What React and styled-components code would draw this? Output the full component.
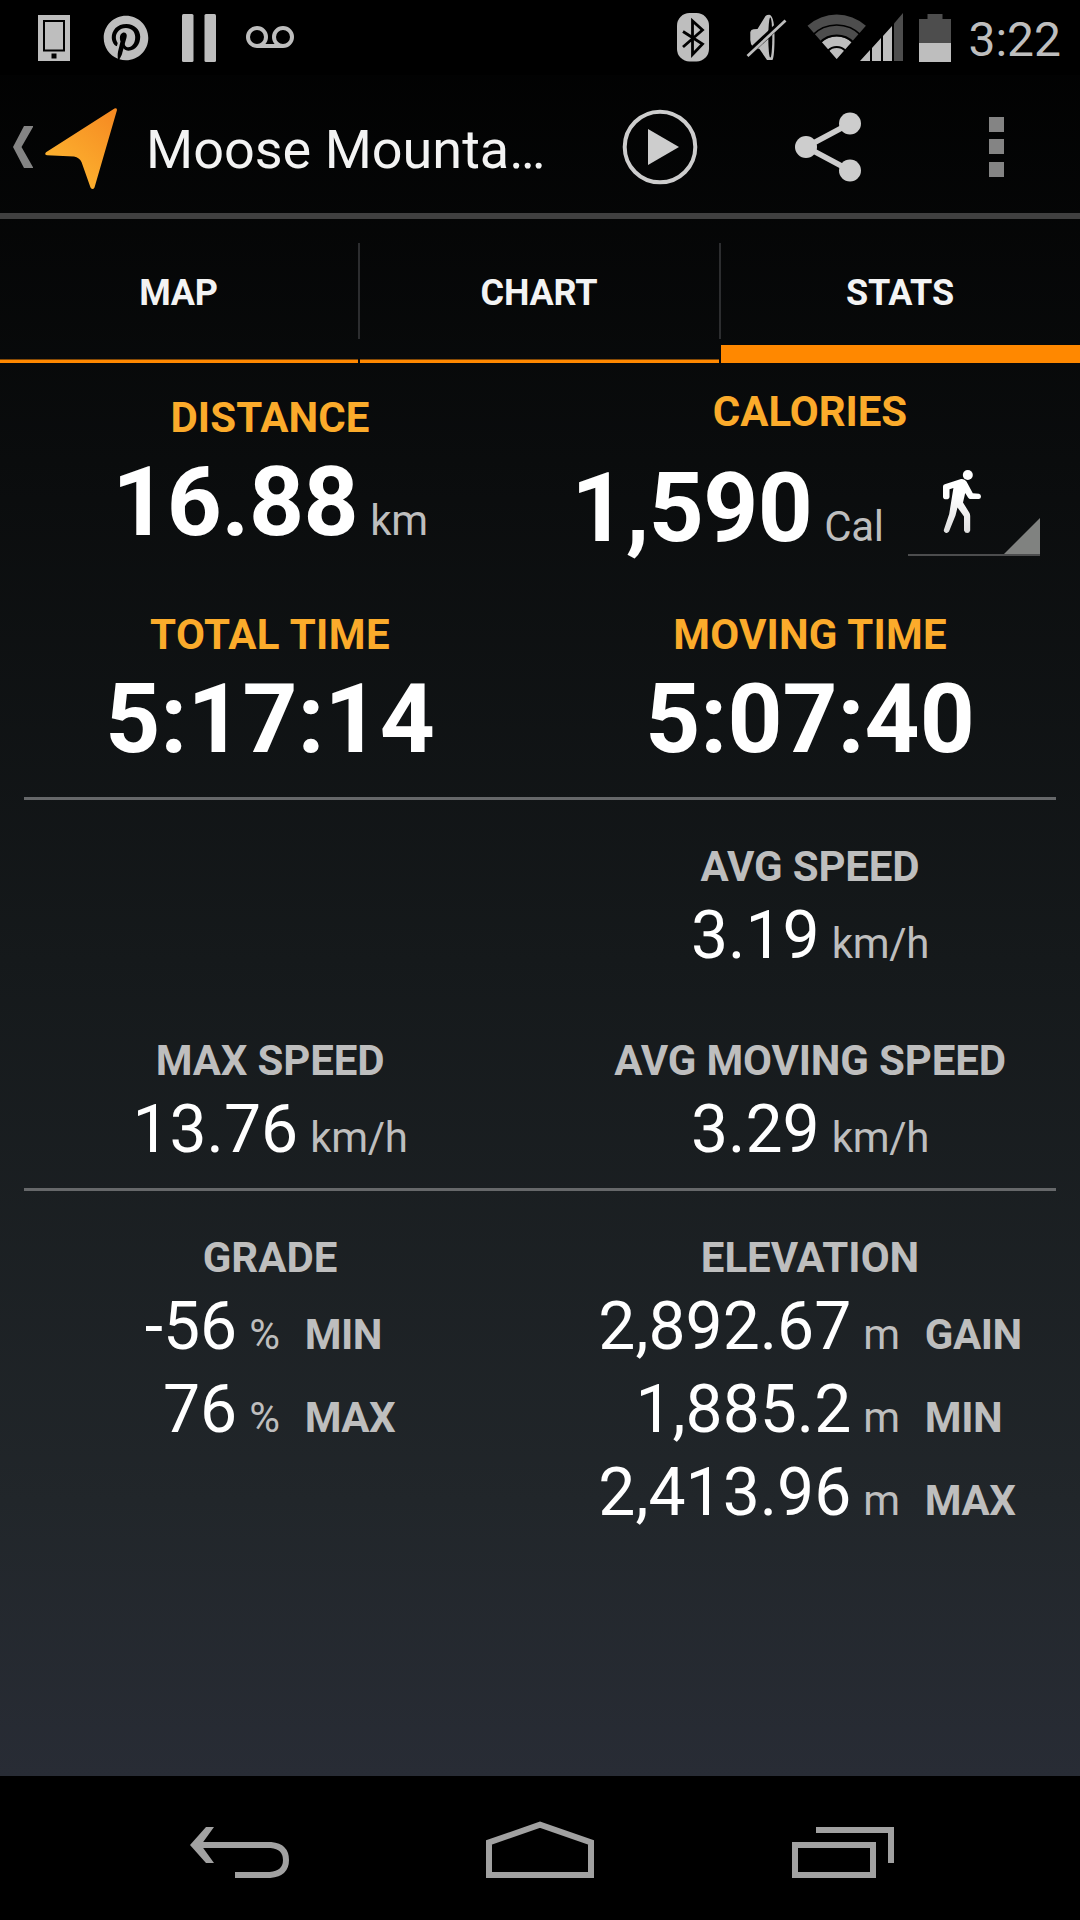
import React from 'react';
import styled, { createGlobalStyle } from 'styled-components';
import { FaPinterest } from 'react-icons/fa';

const GlobalStyle = createGlobalStyle`
  * {
    box-sizing: border-box;
  }

  body {
    margin: 0;
    background: #000;
    font-family: Roboto, sans-serif;
  }

  svg {
    display: block;
    flex-shrink: 0;
  }
`;

const Screen = styled.div`
  display: flex;
  flex-direction: column;
  width: 1080px;
  height: 1920px;
  overflow: hidden;
  background: linear-gradient(180deg, #000 0, #15191b 960px, #21262a 1500px, #282c35 1776px);
`;

const StatusBar = styled.header`
  display: flex;
  align-items: center;
  justify-content: space-between;
  height: 75px;
  padding: 0 19px 0 38px;
  background: #000;
  color: #bebebe;
`;

const Notifications = styled.div`
  display: flex;
  align-items: center;
  gap: 33px;
`;

const VoicemailSlot = styled.div`
  margin: 0 0 2px -3px;
`;

const SystemIcons = styled.div`
  display: flex;
  align-items: center;
`;

const IconSlot = styled.div`
  margin-right: ${props => props.$gap}px;
`;

const Clock = styled.span`
  font-size: 48px;
  line-height: 56px;
  padding-top: 4px;
`;

const ActionBar = styled.div`
  display: flex;
  align-items: center;
  height: 144px;
  border-bottom: 6px solid #404040;
`;

const HomeButton = styled.div`
  display: flex;
  align-items: center;
  width: 146px;
  padding: 6px 0 0 13px;
  gap: 12px;
`;

const LogoSlot = styled.div`
  padding-top: 3px;
`;

const Title = styled.h1`
  flex: 1;
  margin: 0;
  padding-top: 12px;
  color: #f3f3f3;
  font-size: 54px;
  font-weight: 400;
  line-height: 64px;
  white-space: nowrap;
`;

const ActionButton = styled.div`
  display: flex;
  align-items: center;
  justify-content: center;
  width: 168px;
  height: 138px;
  padding-top: 6px;
`;

const Tabs = styled.nav`
  display: grid;
  grid-template-columns: 358px 2px 359px 2px 359px;
  height: 144px;
`;

const Tab = styled.div`
  display: flex;
  align-items: center;
  justify-content: center;
  height: 144px;
  padding: 4px 1px 0 0;
  color: #f3f3f3;
  font-size: 36px;
  font-weight: 700;
  line-height: 42px;
  letter-spacing: -0.2px;
  box-shadow: inset 0 ${props => (props.$active ? -18 : -3.5)}px 0 #ff8800;
`;

const TabDivider = styled.div`
  width: 2px;
  height: 96px;
  margin-top: 24px;
  background: #2c2d2f;
`;

const Stats = styled.main`
  flex: 1;
`;

const Row = styled.section`
  display: grid;
  grid-template-columns: 1fr 1fr;
  height: ${props => props.$height}px;
`;

const Cell = styled.div`
  display: flex;
  flex-direction: column;
  align-items: center;
  padding-top: ${props => props.$top || 0}px;
`;

const Label = styled.h2`
  margin: 0;
  color: ${props => (props.$accent ? '#fbab2b' : '#bebebe')};
  font-size: 42px;
  font-weight: 700;
  line-height: 49px;
  letter-spacing: ${props => props.$track || 0}px;
  white-space: nowrap;
`;

const Reading = styled.div`
  display: flex;
  align-items: baseline;
  margin-top: ${props => props.$top}px;
  white-space: nowrap;
`;

const BigValue = styled.span`
  color: #fff;
  font-size: 96px;
  font-weight: 700;
  line-height: 112px;
  letter-spacing: ${props => props.$track || 0}px;
`;

const Value = styled.span`
  color: #fff;
  font-size: 66px;
  line-height: 77px;
`;

const Unit = styled.span`
  margin-left: 12px;
  color: #bebebe;
  font-size: 42px;
  letter-spacing: -0.3px;
`;

const Divider = styled.hr`
  height: 3px;
  margin: 0 24px 42px;
  border: none;
  background: #66686a;
`;

const RangeTable = styled.div`
  display: grid;
  grid-template-columns: auto auto auto;
  align-items: baseline;
  row-gap: 6px;
  margin-top: 6px;

  ${Value} {
    text-align: right;
  }

  ${Label} {
    margin-left: 25px;
  }
`;

const Spinner = styled.div`
  display: flex;
  align-self: flex-start;
  width: 132px;
  height: 88px;
  margin: 16px 9px 0 24px;
  border-bottom: 2px solid #4c4d4e;
`;

const WalkSlot = styled.div`
  margin: 2px 23px 0 35px;
`;

const CornerSlot = styled.div`
  margin-top: 50px;
`;

const NavBar = styled.footer`
  display: flex;
  justify-content: space-between;
  height: 144px;
  padding: 45px 186px 0 190px;
  background: #000;
`;

const PhoneIcon = () => (
  <svg width="32" height="46" viewBox="0 0 32 46">
    <path fill="#bebebe" d="M0 0h32v46H0z" />
    <path fill="none" stroke="#000" strokeWidth="2" d="M6 6h20v29.500H6z" />
    <path fill="#000" d="M13.500 38.500h5v5h-5z" />
  </svg>
);

const PauseIcon = () => (
  <svg width="34" height="48" viewBox="0 0 34 48" fill="#bebebe">
    <rect width="11.500" height="48" rx="1.500" />
    <rect x="22.500" width="11.500" height="48" rx="1.500" />
  </svg>
);

const VoicemailIcon = () => (
  <svg width="48" height="22" viewBox="0 0 48 22" fill="none" stroke="#bebebe" strokeWidth="4">
    <circle cx="11" cy="11" r="9" />
    <circle cx="37" cy="11" r="9" />
    <path d="M11 20h26" />
  </svg>
);

const BluetoothIcon = () => (
  <svg width="32" height="49" viewBox="0 0 32 49">
    <rect width="32" height="48.500" rx="12.500" fill="#bebebe" />
    <path
      fill="none"
      stroke="#000"
      strokeWidth="2.800"
      d="M6 18.500l19.500 12.500-10 10.500V8l10 9L6 34"
    />
  </svg>
);

const MutedIcon = () => (
  <svg width="41" height="48" viewBox="0 0 41 48">
    <path
      fill="#bebebe"
      d="M4.300 18Q5 15.300 7.500 15.300L11.500 15L19.500 2Q21 .7 24 .9Q28.500 3 28.500 23Q28.500 42 26.500 46H21L13.500 35L7 33Q4.300 30 4.300 26Z"
    />
    <ellipse cx="24.300" cy="23.500" rx="2" ry="20" fill="#000" />
    <path stroke="#000" strokeWidth="6" d="M0 41.500L38 6" />
    <path stroke="#bebebe" strokeWidth="2.800" d="M1.500 42L39.500 6.500" />
  </svg>
);

// wifi fan and mobile signal sit tight against each other
const SignalIcons = () => (
  <svg width="96" height="49" viewBox="0 0 96 49">
    <path fill="#4d4d4d" d="M29.700 46L.5 12.700A44 44 0 0 1 58.900 12.700Z" />
    <path fill="#bebebe" d="M29.700 46L14.800 29.100A22.500 22.500 0 0 1 44.600 29.100Z" />
    <g fill="none" stroke="#000">
      <path strokeWidth="1.600" d="M5.200 22.400A34 34 0 0 1 54.200 22.400" />
      <path strokeWidth="2" d="M12.800 29.700A23.500 23.500 0 0 1 46.600 29.700" />
      <path strokeWidth="2" d="M21 37.700A12 12 0 0 1 38.400 37.700" />
    </g>
    <path fill="#bebebe" d="M53 48L63 37V48ZM65 35L74 25V48H65ZM76 23L85 13V48H76Z" />
    <path fill="#4d4d4d" d="M87 10.500L96 0V48H87Z" />
  </svg>
);

const BatteryIcon = () => (
  <svg width="32" height="48" viewBox="0 0 32 48">
    <path fill="#4d4d4d" d="M0 5h8.500V0h15v5H32v24H0z" />
    <path fill="#bebebe" d="M0 29h32v19H0z" />
  </svg>
);

const BackCaret = () => (
  <svg width="20" height="42" viewBox="0 0 20 42">
    <path fill="#848484" d="M11 0h9.500L8.500 21l12 21H11L0 21z" />
  </svg>
);

const TracksLogo = () => (
  <svg width="72" height="82" viewBox="0 0 72 82">
    <defs>
      <linearGradient id="arrow" x1="0.9" y1="0" x2="0.3" y2="0.8">
        <stop offset="0" stopColor="#f68a22" />
        <stop offset="1" stopColor="#fcb02e" />
      </linearGradient>
    </defs>
    <path
      fill="url(#arrow)"
      d="M69.500 .6L1 44.200Q-1 47 2 47.200L29 48.500Q34.500 49.500 36.500 54L45.500 79.500Q47.700 82.500 49.500 79.500L72 2Q72 -.7 69.500 .6Z"
    />
  </svg>
);

const PlayIcon = () => (
  <svg width="76" height="76" viewBox="0 0 76 76">
    <circle cx="38" cy="38" r="35.300" fill="none" stroke="#cdcdcd" strokeWidth="4" />
    <path fill="#cdcdcd" d="M26 20v36l31-18z" />
  </svg>
);

const ShareIcon = () => (
  <svg width="66" height="70" viewBox="0 0 66 70" fill="#cdcdcd">
    <path fill="none" stroke="#cdcdcd" strokeWidth="5.500" d="M55 11.500L11 35l44 23.500" />
    <circle cx="11" cy="35" r="11" />
    <circle cx="55" cy="11.500" r="11" />
    <circle cx="55" cy="58.500" r="11" />
  </svg>
);

const OverflowIcon = () => (
  <svg width="15" height="60" viewBox="0 0 15 60">
    <path fill="#848484" d="M0 0h15v15H0zM0 22h15v15H0zM0 45h15v15H0z" />
  </svg>
);

const WalkIcon = () => (
  <svg width="38" height="63" viewBox="0 0 38 63">
    <defs>
      <linearGradient id="walk" x1="0" y1="0" x2="0" y2="1">
        <stop offset="0.3" stopColor="#fff" />
        <stop offset="1" stopColor="#dedede" />
      </linearGradient>
    </defs>
    <circle cx="24.800" cy="5" r="5" fill="#fff" />
    <path
      fill="url(#walk)"
      d="M1.800 14.200L18 9.100Q21.500 8.500 23.500 11.500L29.800 23.300L36 23.700Q38 24.500 38 26.500T36 29.100H27.500Q26 29 25 27.500L22.200 23L20 32.500L26.500 43Q27.200 44.500 27.200 46V60.500Q26.500 63 24.200 63T21 60.500V46.500L14.500 37.500L12.500 45.500L6 61.500Q4.500 63.500 2.500 62.700T.8 60L6.200 44L10.400 18L6.500 19.200V27Q6.200 29.300 3.200 29.300T0 27V16.500Q0 14.800 1.800 14.200Z"
    />
  </svg>
);

const CornerIcon = () => (
  <svg width="36" height="36" viewBox="0 0 36 36">
    <path fill="#808280" d="M36 0v36H0z" />
  </svg>
);

const BackIcon = () => (
  <svg width="99" height="58" viewBox="0 0 99 58">
    <path fill="#a1a1a1" d="M16 6h8L11 24l13 18h-8L0 24z" />
    <path fill="none" stroke="#a1a1a1" strokeWidth="6" d="M8 24h73Q96 25.500 96 39T80 54H45" />
  </svg>
);

const HomeIcon = () => (
  <svg width="109" height="58" viewBox="0 0 109 58">
    <path fill="none" stroke="#a1a1a1" strokeWidth="6" d="M3 54V21.500L54 3.700l51 17.800V54z" />
  </svg>
);

const RecentIcon = () => (
  <svg width="102" height="58" viewBox="0 0 102 58">
    <path fill="none" stroke="#a1a1a1" strokeWidth="6" d="M3 24h78v30H3zM24 9h75v33" />
  </svg>
);

const grade = [
  { value: '-56', unit: '%', label: 'MIN' },
  { value: '76', unit: '%', label: 'MAX' },
];

const elevation = [
  { value: '2,892.67', unit: 'm', label: 'GAIN' },
  { value: '1,885.2', unit: 'm', label: 'MIN' },
  { value: '2,413.96', unit: 'm', label: 'MAX' },
];

function Speed({ label, value }) {
  return (
    <Cell>
      <Label $track={-0.15}>{label}</Label>
      <Reading $top={6}>
        <Value>{value}</Value>
        <Unit>km/h</Unit>
      </Reading>
    </Cell>
  );
}

function Range({ label, rows }) {
  return (
    <Cell>
      <Label>{label}</Label>
      <RangeTable>
        {rows.map(row => (
          <React.Fragment key={row.label}>
            <Value>{row.value}</Value>
            <Unit>{row.unit}</Unit>
            <Label as="span" $track={-0.5}>{row.label}</Label>
          </React.Fragment>
        ))}
      </RangeTable>
    </Cell>
  );
}

function App() {
  return (
    <Screen>
      <GlobalStyle />
      <StatusBar>
        <Notifications>
          <PhoneIcon />
          <FaPinterest size={46} />
          <PauseIcon />
          <VoicemailSlot>
            <VoicemailIcon />
          </VoicemailSlot>
        </Notifications>
        <SystemIcons>
          <IconSlot $gap={37}><BluetoothIcon /></IconSlot>
          <IconSlot $gap={20}><MutedIcon /></IconSlot>
          <IconSlot $gap={16}><SignalIcons /></IconSlot>
          <IconSlot $gap={17}><BatteryIcon /></IconSlot>
          <Clock>3:22</Clock>
        </SystemIcons>
      </StatusBar>

      <ActionBar>
        <HomeButton>
          <BackCaret />
          <LogoSlot>
            <TracksLogo />
          </LogoSlot>
        </HomeButton>
        <Title>Moose Mounta…</Title>
        <ActionButton><PlayIcon /></ActionButton>
        <ActionButton><ShareIcon /></ActionButton>
        <ActionButton><OverflowIcon /></ActionButton>
      </ActionBar>

      <Tabs>
        <Tab>MAP</Tab>
        <TabDivider />
        <Tab>CHART</Tab>
        <TabDivider />
        <Tab $active>STATS</Tab>
      </Tabs>

      <Stats>
        <Row $height={247}>
          <Cell $top={30}>
            <Label $accent $track={0.1}>DISTANCE</Label>
            <Reading $top={4}>
              <BigValue $track={-0.4}>16.88</BigValue>
              <Unit>km</Unit>
            </Reading>
          </Cell>
          <Cell $top={24}>
            <Label $accent $track={-0.05}>CALORIES</Label>
            <Reading $top={16}>
              <BigValue $track={-0.6}>1,590</BigValue>
              <Unit>Cal</Unit>
              <Spinner>
                <WalkSlot><WalkIcon /></WalkSlot>
                <CornerSlot><CornerIcon /></CornerSlot>
              </Spinner>
            </Reading>
          </Cell>
        </Row>
        <Row $height={187}>
          <Cell>
            <Label $accent $track={0.4}>TOTAL TIME</Label>
            <Reading $top={4}><BigValue>5:17:14</BigValue></Reading>
          </Cell>
          <Cell>
            <Label $accent $track={0.2}>MOVING TIME</Label>
            <Reading $top={4}><BigValue>5:07:40</BigValue></Reading>
          </Cell>
        </Row>
        <Divider />
        <Row $height={194}>
          <Cell />
          <Speed label="AVG SPEED" value="3.19" />
        </Row>
        <Row $height={152}>
          <Speed label="MAX SPEED" value="13.76" />
          <Speed label="AVG MOVING SPEED" value="3.29" />
        </Row>
        <Divider />
        <Row $height={340}>
          <Range label="GRADE" rows={grade} />
          <Range label="ELEVATION" rows={elevation} />
        </Row>
      </Stats>

      <NavBar>
        <BackIcon />
        <HomeIcon />
        <RecentIcon />
      </NavBar>
    </Screen>
  );
}

export default App;
